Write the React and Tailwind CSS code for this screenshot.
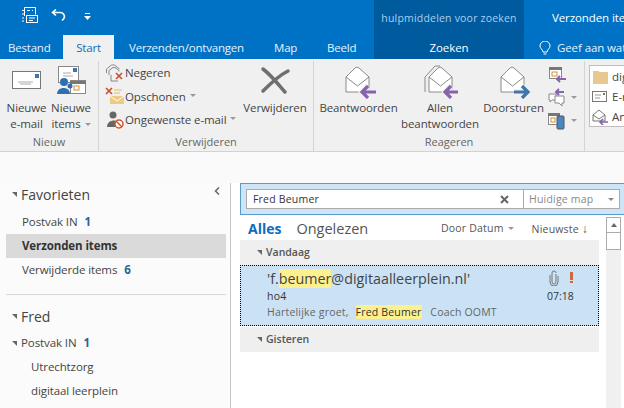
const F = { fontFamily: '"Open Sans","Noto Sans",sans-serif' };

const Env = ({ arrow, back }) => (
  <svg width="50" height="36" viewBox="0 2 50 36" fill="none">
    <g stroke="#8a8a8a" transform={back ? 'translate(2 0)' : undefined}>
      {back && <path d="M8 31V16L18 5h5" />}
      <path d="M12 16 21 7a3 3 0 0 1 4 0l10 9v15H12z" fill="#fff" />
      <path d="M12 16l11.500 9L35 16" />
    </g>
    {arrow === 'l' && <g><path d={back ? 'M43 31H30m6-6-6 6 6 6' : 'M42 31H28m6-6-6 6 6 6'} fill="none" stroke="#f0f0f0" strokeWidth="5.500" /><path d={back ? 'M43 31H30m6-6-6 6 6 6' : 'M42 31H28m6-6-6 6 6 6'} stroke="#8763ac" strokeWidth="3.200" /></g>}
    {arrow === 'r' && <g><path d="M25 31h14m-6-6 6 6-6 6" stroke="#f0f0f0" strokeWidth="5.500" /><path d="M25 31h14m-6-6 6 6-6 6" stroke="#3f74ad" strokeWidth="3.200" /></g>}
  </svg>
);

const Caret = ({ c = '#999' }) => <span className="inline-block ml-[4px] mb-[2px] border-x-[3px] border-t-[3px] border-x-transparent" style={{ borderTopColor: c }} />;
const Tri = () => <span className="inline-block w-0 h-0 border-l-[5px] border-t-[5px] border-l-transparent border-t-[#666]" />;

const Tab = ({ children, className = '' }) => <div className={`text-[11.5px] tracking-[-0.2px] leading-[22px] text-[#e6f2fb] ${className}`}>{children}</div>;

const Big = ({ icon, lines, className = '' }) => (
  <div className={`flex flex-col items-center shrink-0 ${className}`}>
    <div className="h-[38px] flex items-end justify-center">{icon}</div>
    <div className="text-center text-[11.5px] tracking-[-0.1px] leading-[16px] text-[#444] mt-[1px] whitespace-nowrap">{lines}</div>
  </div>
);

const Group = ({ label, children, className = '' }) => (
  <div className={`flex flex-col h-full border-r border-[#d4d4d4] shrink-0 ${className}`}>
    <div className="flex-1 min-h-0">{children}</div>
    <div className="text-center text-[11px] leading-[16px] text-[#666] mb-[1px]">{label}</div>
  </div>
);

const SmallRow = ({ icon, children }) => (
  <div className="flex items-center h-[23.5px] text-[11.5px] tracking-[-0.1px] text-[#444] whitespace-nowrap">
    <span className="w-[20px] h-[20px] shrink-0">{icon}</span>{children}
  </div>
);

const NavItem = ({ children, n, className = '' }) => (
  <div className={`h-[24px] leading-[24px] pl-[16px] text-[11.5px] tracking-[-0.1px] text-[#444] ${className}`}>
    {children}{n && <span className="ml-[7px] font-bold text-[#2a6496]">{n}</span>}
  </div>
);

export default function App() {
  return (
    <div className="w-[624px] h-[408px] overflow-hidden bg-white flex flex-col" style={F}>
      {/* title + tabs */}
      <div className="h-[59px] shrink-0 bg-[#0072c6] flex">
        <div className="w-[374px] flex flex-col shrink-0">
          <div className="h-[37px] flex items-center pl-[21px] pb-[7px]">
            <svg width="18" height="18" viewBox="0 0 18 18" fill="none" stroke="#fff"><path d="M3.5 10V1.5h11v7M6 4.5h3M11 4.5h1M3 4.5H1M3 8H1M3 12H1M3 15H1" /><rect x="5.5" y="9.5" width="11" height="7" /><path d="M8 12h6M8 14.500h4" /></svg>
            <svg className="ml-[12px]" width="15" height="13" viewBox="0 0 15 13" fill="none" stroke="#fff" strokeWidth="1.6"><path d="M1.500 3.500h8a4 4 0 0 1 3 6.500L11 11.500M5 .5 1.500 3.500 5 6.500" /></svg>
            <svg className="ml-[18px] mt-[4px]" width="7" height="8" viewBox="0 0 7 8" fill="#fff"><path d="M1 0h5v1H1zM0 3h7L3.500 7z" /></svg>
          </div>
          <div className="h-[22px] flex whitespace-nowrap">
            <Tab className="ml-[8px] w-[55px]">Bestand</Tab>
            <div className="w-[51px] h-[24px] -mt-[2px] bg-[#f0f0f0] text-center text-[11.5px] tracking-[-0.2px] leading-[25px] text-[#0f6cbd]">Start</div>
            <Tab className="ml-[15px] w-[145px]">Verzenden/ontvangen</Tab>
            <Tab className="w-[53px]">Map</Tab>
            <Tab>Beeld</Tab>
          </div>
        </div>
        <div className="w-[150px] shrink-0 bg-[#005a9e] flex flex-col items-center">
          <div className="h-[37px] text-[10.500px] leading-[36px] tracking-[0.2px] text-[#a9cfee] whitespace-nowrap">hulpmiddelen voor zoeken</div>
          <div className="text-[11.5px] tracking-[-0.1px] leading-[22px] text-white">Zoeken</div>
        </div>
        <div className="flex-1 min-w-0 overflow-hidden">
          <div className="h-[37px] pl-[28px] text-[11.5px] tracking-[-0.1px] leading-[36px] text-white whitespace-nowrap">Verzonden items</div>
          <div className="flex items-center h-[22px] pl-[15px] text-[11.5px] tracking-[-0.1px] text-[#e6f2fb] whitespace-nowrap">
            <svg width="12" height="15" viewBox="0 0 12 15" fill="none" stroke="#fff" className="mr-[6px] shrink-0"><path d="M4 11C3.500 8 1 7.500 1 5a5 5 0 0 1 10 0c0 2.500-2.500 3-3 6zM4.500 13h3" /></svg>
            Geef aan wat u wilt doen
          </div>
        </div>
      </div>

      {/* ribbon */}
      <div className="h-[93px] shrink-0 bg-[#f0f0f0] border-b border-[#d2d2d2] flex items-stretch pt-[2px] overflow-hidden">
        <Group label="Nieuw" className="w-[99px]">
          <div className="flex pl-[5px]">
            <Big className="w-[43px]" lines={<>Nieuwe<br />e-mail</>} icon={
              <svg width="30" height="19" viewBox="0 0 30 19" className="mb-[9px]"><rect x=".5" y=".5" width="28" height="17" fill="#fff" stroke="#777" /><rect x="23" y="3" width="4" height="4" fill="#3f74ad" /><path d="M6 11h15M8 13h11" stroke="#aaa" /></svg>
            } />
            <Big className="w-[46px]" lines={<>Nieuwe<br />items<Caret /></>} icon={
              <svg width="30" height="30" viewBox="0 0 30 30" className="mb-[3px]"><rect x="2.500" y=".5" width="20" height="16" fill="#fff" stroke="#888" /><rect x="17" y="2" width="4" height="4" fill="#3f74ad" /><path d="M7 7h8M7 10h10" stroke="#aaa" /><rect x="14.500" y="14.500" width="15" height="13" fill="#fff" stroke="#888" /><path d="M14 15h16v3H14z" fill="#777" /><rect x="18" y="20" width="5" height="4" fill="#fff" stroke="#d8912b" /><circle cx="8" cy="16" r="4" fill="#2f6faf" /><path d="M1 28c0-8 13-8 13 0z" fill="#2f6faf" /><circle cx="14" cy="20" r="2.500" fill="#2f6faf" /></svg>
            } />
          </div>
        </Group>
        <Group label="Verwijderen" className="w-[215px]">
          <div className="flex pl-[6px]">
            <div className="w-[139px] shrink-0">
              <SmallRow icon={<svg width="20" height="20" viewBox="0 0 20 20" fill="none" stroke="#888"><path d="M1.500 10V6l5-4h3l5 4M4 12V7.500l4-3h2l4 3v1" /><path d="M6 12v6h7" /><path d="M11 10l6 6m0-6-6 6" stroke="#c94f2c" strokeWidth="1.600" /></svg>}>Negeren</SmallRow>
              <SmallRow icon={<svg width="20" height="20" viewBox="0 0 20 20" fill="none"><path d="M1 2l6 6m0-6L1 8" stroke="#c94f2c" strokeWidth="1.600" /><path d="M9 4h8M9 7h6" stroke="#e9b86a" /><rect x="5" y="10" width="14" height="8" fill="#eecb83" /><path d="M5 10l7 5 7-5" stroke="#fff" /></svg>}>Opschonen<Caret /></SmallRow>
              <SmallRow icon={<svg width="20" height="20" viewBox="0 0 20 20" fill="none"><circle cx="8" cy="5" r="3.500" fill="#666" /><path d="M2 17c0-8 12-8 11-3l-2 3z" fill="#666" /><circle cx="14" cy="14" r="4" fill="#fff" stroke="#d2562c" strokeWidth="1.500" /><path d="M11 11l6 6" stroke="#d2562c" strokeWidth="1.500" /></svg>}>Ongewenste e-mail<Caret /></SmallRow>
            </div>
            <Big className="w-[62px]" lines="Verwijderen" icon={
              <svg width="32" height="30" viewBox="0 0 32 30" className="mb-[3px]"><path d="M4 3c8 6 15 15 22 23M29 5C21 9 12 17 4 25" fill="none" stroke="#6f6f6f" strokeWidth="3.500" strokeLinecap="round" /></svg>
            } />
          </div>
        </Group>
        <Group label="Reageren" className="w-[271px]">
          <div className="flex pl-[6px]">
            <Big className="w-[77px]" lines="Beantwoorden" icon={<Env arrow="l" />} />
            <Big className="w-[86px]" lines={<>Allen<br />beantwoorden</>} icon={<Env arrow="l" back />} />
            <Big className="w-[61px]" lines="Doorsturen" icon={<Env arrow="r" />} />
            <div className="ml-[3px] flex flex-col gap-[3px] pt-[4px]">
              <svg width="20" height="20" viewBox="0 0 20 20" fill="none"><rect x="2.500" y="2.500" width="12" height="11" fill="#fff" stroke="#888" /><path d="M2 2h13v3H2z" fill="#777" /><rect x="5" y="7" width="5" height="4" stroke="#d8912b" /><path d="M19 14h-9m3-3-3 3 3 3" stroke="#8763ac" strokeWidth="2" /></svg>
              <div className="flex items-center"><svg width="20" height="20" viewBox="0 0 20 20" fill="none"><path d="M2 6h7v6H5l-2 2v-2H2z" stroke="#888" fill="#fff" /><path d="M8 8h9v7h-2v3l-3-3H8z" stroke="#888" fill="#fff" /><path d="M17 4H9m3-3L9 4l3 3" stroke="#8763ac" strokeWidth="2" /></svg><Caret /></div>
              <div className="flex items-center"><svg width="20" height="20" viewBox="0 0 20 20" fill="none"><rect x="1.500" y="2.500" width="11" height="11" fill="#fff" stroke="#888" /><path d="M1 2h12v3H1z" fill="#777" /><rect x="4" y="7" width="4" height="4" stroke="#d8912b" /><rect x="10" y="5" width="7" height="13" rx="1" fill="#4a87c2" stroke="#555" /></svg><Caret /></div>
            </div>
          </div>
        </Group>
        <div className="ml-[4px] mt-[4px] w-[60px] h-[62px] bg-white border border-[#bdbdbd] shrink-0 text-[11.500px] text-[#444] whitespace-nowrap overflow-hidden pt-[1px]">
          <div className="flex items-center h-[20px] pl-[2px]"><svg width="16" height="16" viewBox="0 0 16 16" className="mr-[4px] shrink-0"><path d="M1 2h5l2 1h8v12H1z" fill="#e8c88f" /></svg>digitaal</div>
          <div className="flex items-center h-[20px] pl-[2px]"><svg width="16" height="12" viewBox="0 0 16 12" fill="none" className="mr-[4px] shrink-0"><rect x=".5" y=".5" width="14" height="10" stroke="#777" /><path d="M3 4h6M3 7h5" stroke="#999" /><path d="M11 2h2v2h-2z" fill="#777" /></svg>E-mail</div>
          <div className="flex items-center h-[20px] pl-[2px]"><svg width="16" height="16" viewBox="0 0 16 16" fill="none" className="mr-[4px] shrink-0"><path d="M1 6l6-5 6 5v6H1zM1 6l6 4 6-4" stroke="#777" /><path d="M16 13H8m3-3-3 3 3 3" stroke="#8763ac" strokeWidth="1.600" /></svg>Antwoord</div>
        </div>
      </div>

      {/* spacer */}
      <div className="h-[31px] shrink-0 bg-[#fafafa]" />

      {/* body */}
      <div className="flex-1 min-h-0 flex">
        <div className="w-[231px] shrink-0 border-r border-[#c6c6c6] bg-[#fbfbfb] pl-[6px] pr-[4px] relative">
          <svg className="absolute left-[214px] top-[4px]" width="6" height="8" viewBox="0 0 6 8" fill="none" stroke="#666" strokeWidth="1.500"><path d="M5 .5 1.500 4 5 7.500" /></svg>
          <div className="h-[23px] flex items-center pl-[6px] text-[14px] text-[#444]"><Tri /><span className="ml-[4px]">Favorieten</span></div>
          <div className="pt-[4px]">
            <NavItem n="1">Postvak IN</NavItem>
            <NavItem className="bg-[#dadada] !text-[#333] font-bold">Verzonden items</NavItem>
            <NavItem n="6">Verwijderde items</NavItem>
          </div>
          <div className="mt-[12px] h-px bg-[#d6d6d6]" />
          <div className="mt-[9px] h-[24px] flex items-center pl-[6px] text-[14px] text-[#444]"><Tri /><span className="ml-[4px]">Fred</span></div>
          <div className="mt-[3px] h-[24px] leading-[24px] flex items-center pl-[6px] text-[11.500px] tracking-[-0.1px] text-[#444]"><Tri /><span className="ml-[4px]">Postvak IN</span><span className="ml-[7px] font-bold text-[#2a6496]">1</span></div>
          <NavItem className="!pl-[25px]">Utrechtzorg</NavItem>
          <NavItem className="!pl-[25px]">digitaal leerplein</NavItem>
        </div>
        <div className="flex-1 min-w-0 pl-[9px] bg-white">
          <div className="h-[32px] bg-[#cde5f7] border border-[#5a9bc9] flex items-center px-[5px] -mr-[2px]">
            <div className="h-[20px] flex-1 flex bg-white border border-[#ababab] text-[10.500px] tracking-[0.2px]">
              <div className="flex-1 pl-[6px] leading-[18px] text-[#333] relative">Fred Beumer
                <svg className="absolute right-[14px] top-[5px]" width="9" height="9" viewBox="0 0 9 9" stroke="#666" strokeWidth="2"><path d="M1 1l7 7m0-7-7 7" /></svg>
              </div>
              <div className="w-[96px] border-l border-[#ababab] pl-[5px] leading-[18px] text-[#888] relative">Huidige map
                <span className="absolute right-[5px] top-[8px] border-x-[3px] border-t-[3px] border-x-transparent border-t-[#888]" />
              </div>
            </div>
          </div>
          <div className="flex">
            <div className="w-[359px] shrink-0">
              <div className="h-[25px] flex items-center pl-[8px] pt-[2px] whitespace-nowrap">
                <span className="font-bold text-[14px] text-[#0f6cbd]">Alles</span>
                <span className="ml-[15px] text-[14.500px] text-[#555]">Ongelezen</span>
                <span className="ml-auto text-[10.500px] tracking-[0.2px] text-[#555]">Door Datum<Caret /></span>
                <span className="ml-[18px] mr-[11px] text-[10.500px] tracking-[0.2px] text-[#555]">Nieuwste <span className="text-[12px]">↓</span></span>
              </div>
              <div className="h-[25px] bg-[#efefef] flex items-center pl-[17px] text-[10.500px] font-semibold text-[#555]"><Tri /><span className="ml-[4px]">Vandaag</span></div>
              <div className="h-[61px] bg-[#cbe2f5] border border-dotted border-black relative pl-[26px] pt-[2px] text-[#444] whitespace-nowrap">
                <div className="text-[14.300px] leading-[22px]">'f.<span className="bg-[#fdf08e]">beumer</span>@digitaalleerplein.nl'</div>
                <div className="text-[10.500px] leading-[15px] text-[#333] tracking-[0.2px] -mt-[1px]">ho4</div>
                <div className="text-[10.500px] leading-[16px] text-[#666] tracking-[0.2px]">Hartelijke groet,&nbsp; <span className="bg-[#fdf08e] text-[#333] ml-[1px]">Fred Beumer</span>&nbsp;&nbsp; Coach OOMT</div>
                <svg className="absolute left-[308px] top-[4px]" width="10" height="16" viewBox="0 0 10 16" fill="none" stroke="#777"><path d="M7 4v8a2 2 0 0 1-4 0V3a2 2 0 0 1 4 0M9 6v6a4 4 0 0 1-8 0V5" /></svg>
                <div className="absolute left-[329px] top-[6px] w-[3px] h-[8px] bg-[#cf6a3d]" />
                <div className="absolute left-[329px] top-[15px] w-[3px] h-[2px] bg-[#cf6a3d]" />
                <div className="absolute left-[306px] top-[23px] text-[10.500px] leading-[15px] text-[#333]">07:18</div>
              </div>
              <div className="mt-[1px] h-[25px] bg-[#efefef] flex items-center pl-[17px] text-[10.500px] font-semibold text-[#555]"><Tri /><span className="ml-[4px]">Gisteren</span></div>
            </div>
            <div className="ml-[7px] w-[15px] h-[200px] bg-[#f0f0f0] shrink-0 mt-[2px] flex flex-col items-stretch">
              <div className="h-[16px] border border-[#ababab] bg-white flex items-center justify-center"><span className="border-x-[3px] border-b-[4px] border-x-transparent border-b-[#666]" /></div>
              <div className="h-[17px] border border-t-0 border-[#ababab] bg-white" />
            </div>
          </div>
        </div>
      </div>
    </div>
  );
}
